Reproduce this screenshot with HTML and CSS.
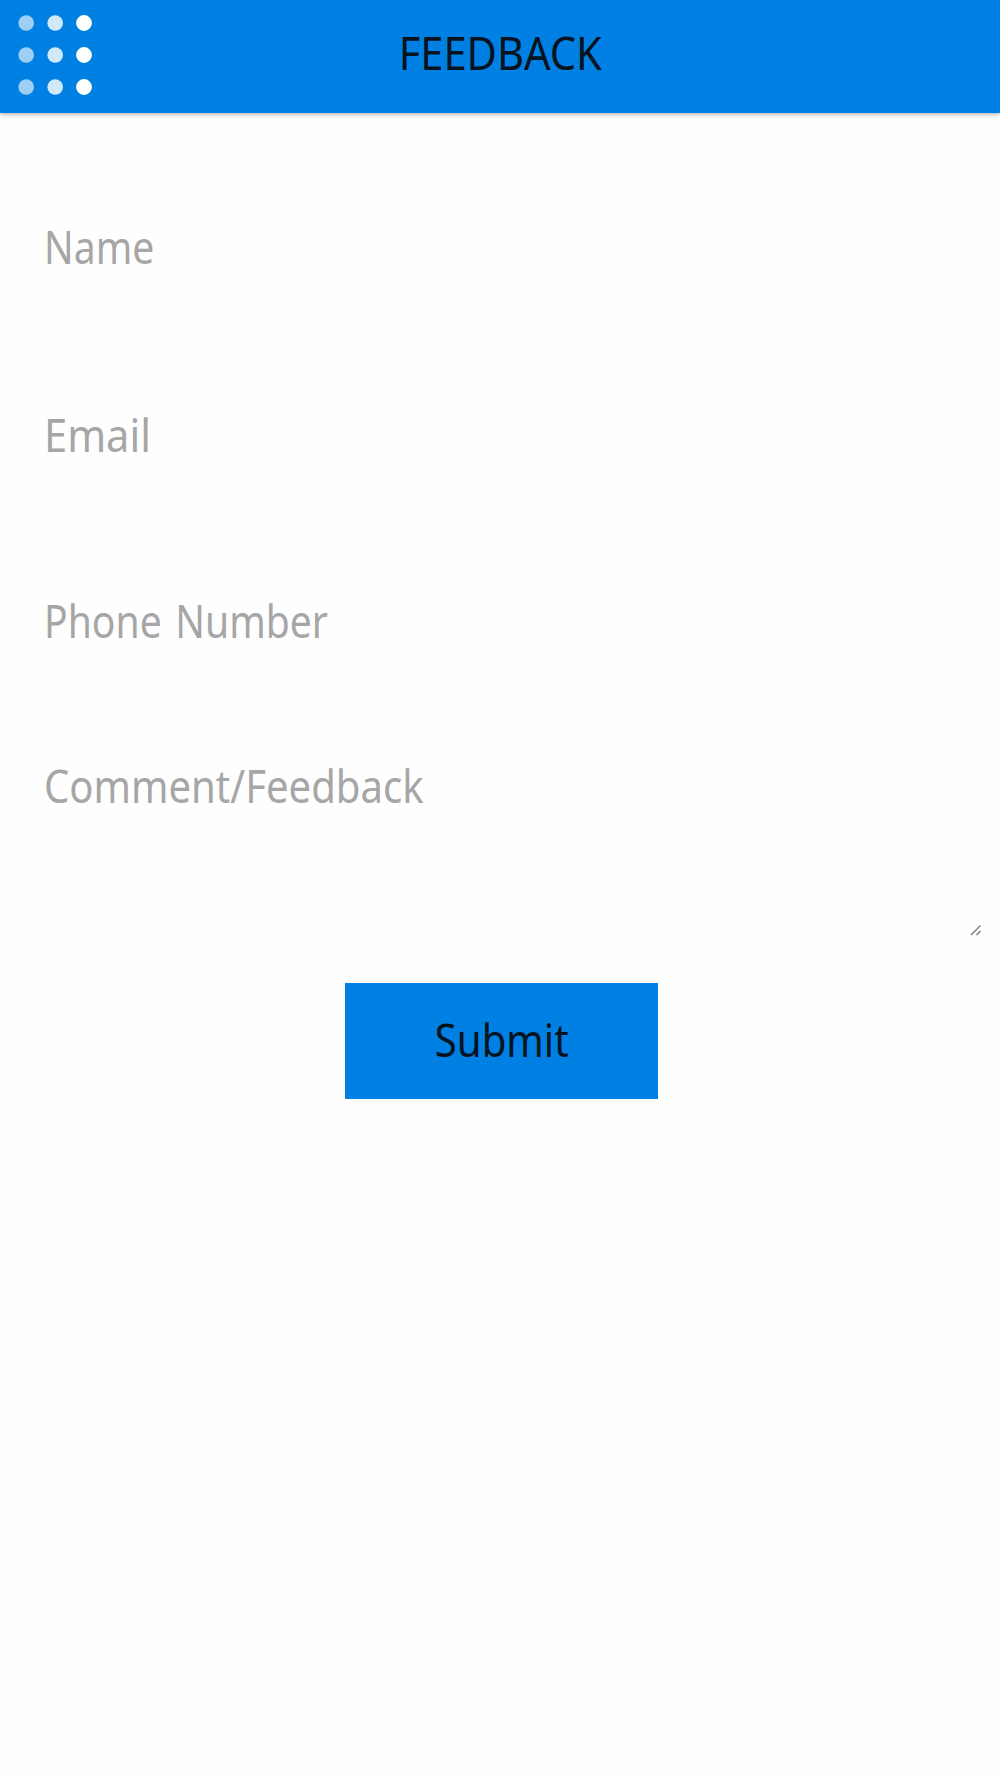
FILE: index.html
```html
<!DOCTYPE html>
<html lang="en">
<head>
<meta charset="utf-8">
<title>Feedback</title>
<link rel="stylesheet" href="styles.css">
</head>
<body>
<header class="bar">
  <svg class="menu" width="76" height="82" viewBox="0 0 76 82" fill="#fff" aria-label="Menu">
    <g opacity=".62"><circle cx="9.2" cy="9" r="7.8"/><circle cx="9.2" cy="41" r="7.8"/><circle cx="9.2" cy="73" r="7.8"/></g>
    <g opacity=".82"><circle cx="38.2" cy="9" r="7.8"/><circle cx="38.2" cy="41" r="7.8"/><circle cx="38.2" cy="73" r="7.8"/></g>
    <circle cx="67" cy="9" r="7.9"/><circle cx="67" cy="41" r="7.9"/><circle cx="67" cy="73" r="7.9"/>
  </svg>
  <h1 class="title"><span class="text text-title">FEEDBACK</span></h1>
</header>
<form class="form">
  <div class="field name"><span class="text text-name">Name</span></div>
  <div class="field email"><span class="text text-email">Email</span></div>
  <div class="field phone"><span class="text text-phone">Phone Number</span></div>
  <div class="field comment">
    <span class="text text-comment">Comment/Feedback</span>
    <svg class="grip" width="12" height="12" viewBox="0 0 12 12" fill="none" stroke="#777" stroke-width="1.3"><path d="M1 11 10.5 1.5M6.5 11 10.5 7"/></svg>
  </div>
  <button class="submit" type="button"><span class="text text-submit">Submit</span></button>
</form>
</body>
</html>
```
FILE: styles.css
```css
* { box-sizing: border-box; }
body {
  margin: 0;
  min-height: 1778px;
  background: #fefefe;
  font: 46px/60px "Noto Sans", "Open Sans", sans-serif;
}
.bar {
  display: grid;
  grid-template-columns: 100px 1fr 100px;
  height: 113px;
  background: #0080e3;
  box-shadow: 0 1px 5px rgba(0, 0, 0, .35);
}
.menu { margin: 14px 0 0 17px; }
.title {
  margin: 22px 0 0;
  text-align: center;
  font: inherit;
  color: #07131f;
}
.text {
  display: inline-block;
  white-space: nowrap;
  transform-origin: left center;
}
.form {
  display: flex;
  flex-direction: column;
  padding: 103px 18px 0 44px;
}
.field { color: #a6a6a6; }
.name { height: 188px; }
.email { height: 186px; }
.phone { height: 165px; }
.comment {
  display: flex;
  justify-content: space-between;
  align-items: flex-start;
  height: 181px;
}
.grip { align-self: flex-end; }
.submit {
  width: 313px;
  height: 116px;
  margin: 47px 0 0 301px;
  padding: 0 0 5px;
  border: 0;
  background: #0080e3;
  color: #07131f;
  font: inherit;
}
.text-title { transform: scaleX(.905); transform-origin: center; }
.text-name { transform: scaleX(.85); }
.text-email { transform: scaleX(.905); }
.text-phone { transform: scaleX(.85); word-spacing: 4px; }
.text-comment { transform: scaleX(.871); }
.text-submit { transform: scaleX(.872); transform-origin: center; }
```
